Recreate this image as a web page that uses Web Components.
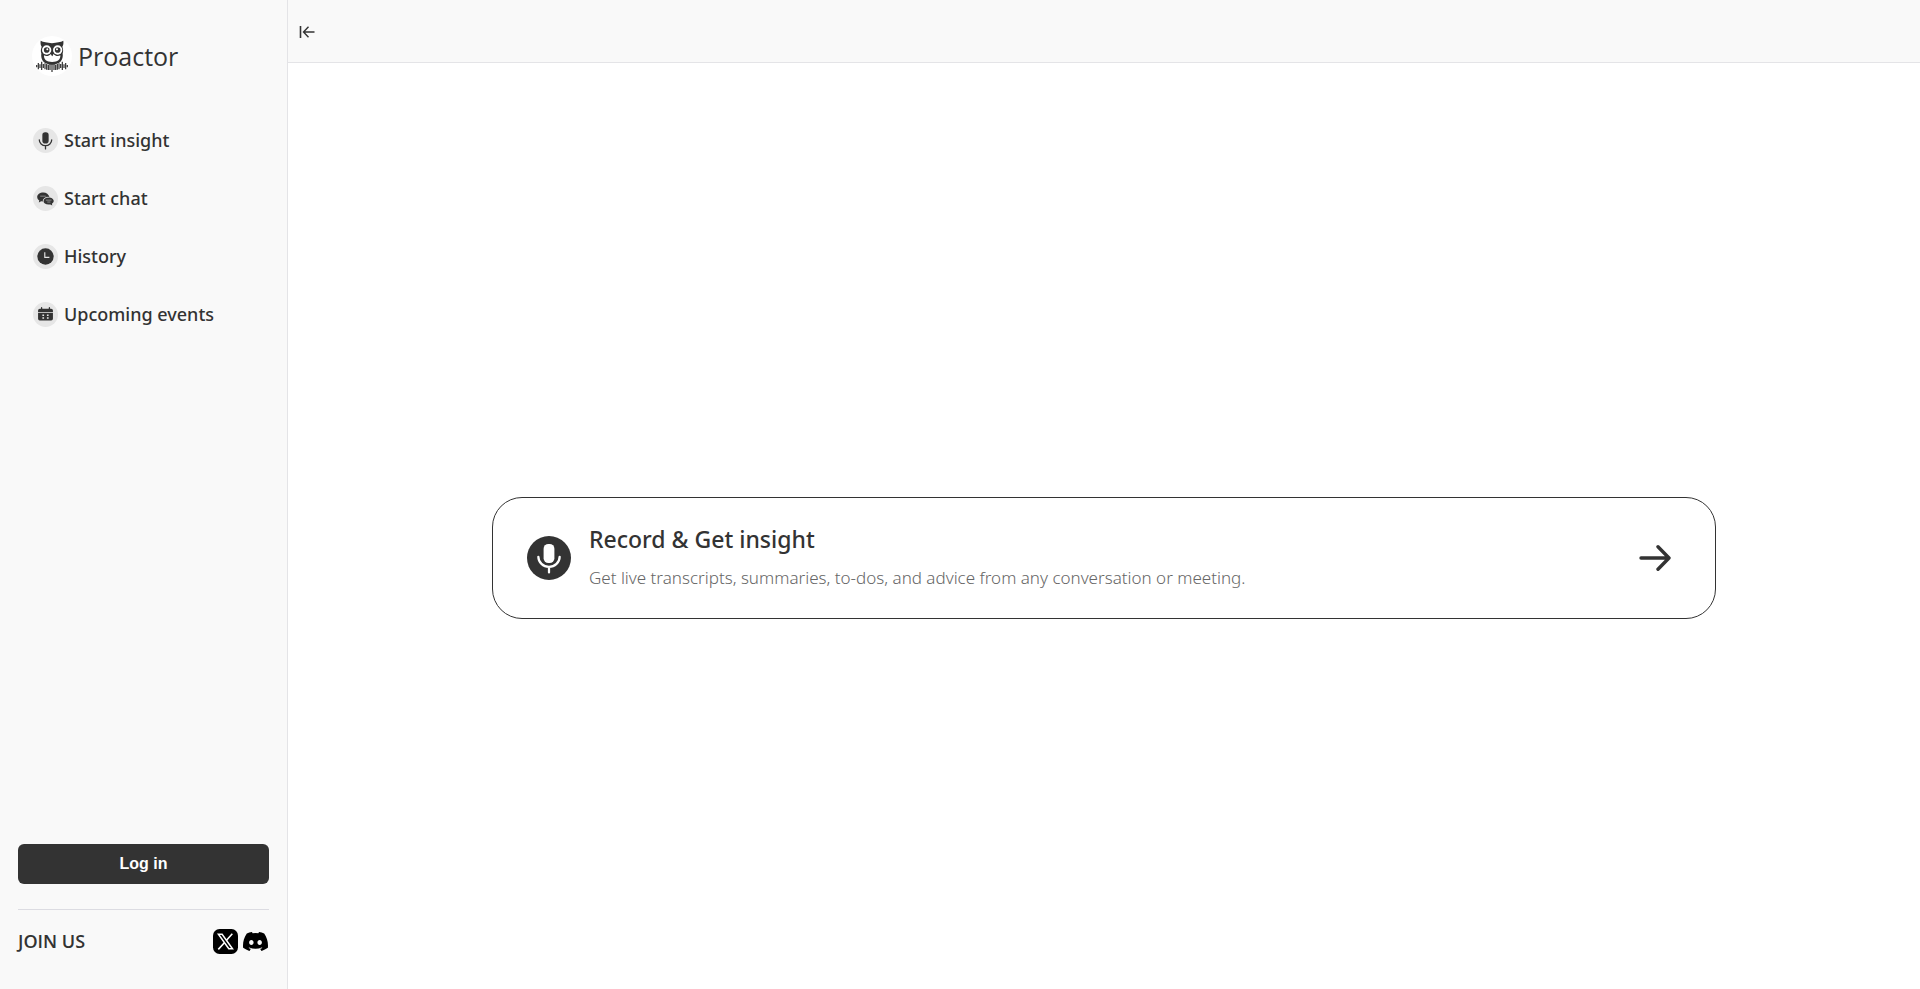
<!DOCTYPE html>
<html lang="en">
<head>
<meta charset="utf-8">
<title>Proactor</title>
<style>
  html, body { height: 100%; margin: 0; }
  body { font-family: "Open Sans", "Noto Sans", sans-serif; color: #333; background: #fff; }
</style>
</head>
<body>
<pro-app></pro-app>
<script>
const icons = {
  mic: `<svg viewBox="0 0 24 24" aria-hidden="true"><rect x="8.4" y="2.600" width="7.200" height="12.800" rx="3.200" fill="currentColor"/><path d="M4.900 11.200a7.100 6.700 0 0 0 14.200 0M12 18v3.600" fill="none" stroke="currentColor" stroke-width="1.500" stroke-linecap="round"/></svg>`,
  chat: `<svg viewBox="0 0 24 24" aria-hidden="true"><path d="M9 3.600c-5 0-8.700 2.700-8.700 6.300 0 2.100 1 3.700 2.900 4.900l-.6 2.700 3.300-1.700 2.400.3c.2-4 3.600-6.600 9.300-6.100C16.500 6.200 13.200 3.600 9 3.600z" fill="currentColor"/><path d="M16.300 10.600c-4.100 0-7.200 2.200-7.200 5s3.100 5 7.200 5c.9 0 1.800-.1 2.600-.3l2.700 1.500-.5-2.500c1.500-.9 2.500-2.200 2.500-3.700 0-2.800-3.200-5-7.300-5z" fill="currentColor"/><path d="M4.500 8.700h8M12.500 14.300h8M14.500 17h4.500" stroke="#aaa" stroke-width="1"/><path d="M8.500 16c0-3.500 3-6.100 8-6.100" fill="none" stroke="#e6e6e6" stroke-width=".7"/></svg>`,
  clock: `<svg viewBox="0 0 24 24" aria-hidden="true"><circle cx="12" cy="12" r="11.500" fill="currentColor"/><path d="M11 6v7.200h6.500" fill="none" stroke="#e6e6e6" stroke-width="1.600"/></svg>`,
  calendar: `<svg viewBox="0 0 24 24" aria-hidden="true"><path d="M4 4h16a2.500 2.500 0 0 1 2.500 2.500V8.600h-21V6.500A2.500 2.500 0 0 1 4 4zM1.500 9.700h21V18a2.500 2.500 0 0 1-2.500 2.500H4A2.500 2.500 0 0 1 1.500 18z" fill="currentColor"/><path d="M6.500 2.400v3M17.500 2.400v3" stroke="currentColor" stroke-width="1.800" stroke-linecap="round"/><path d="M7.600 12h2.400v2H7.600zM14 12h2.400v2H14zM7.600 16h2.400v2H7.600zM14 16h2.400v2H14z" fill="#e6e6e6"/></svg>`,
  collapse: `<svg viewBox="0 0 16 14" aria-hidden="true"><path d="M1.500 1v12" stroke="currentColor" stroke-width="1.600" fill="none"/><path d="M15.500 7H5M9.500 1.800L4.500 7l5 5.200" stroke="currentColor" stroke-width="1.400" fill="none"/></svg>`,
  arrow: `<svg viewBox="0 0 32 32" aria-hidden="true"><path d="M2 16h28M19 4.800L30 16 19 27.200" fill="none" stroke="currentColor" stroke-width="3.400" stroke-linecap="round" stroke-linejoin="round"/></svg>`,
  x: `<svg viewBox="0 0 25 25" aria-hidden="true"><rect width="25" height="25" rx="6.500" fill="#000"/><path d="M5.400 5.200h3.700l10.400 14.600h-3.700z" fill="none" stroke="#fff" stroke-width="1.500"/><path d="M19.300 4.800l-6 6.700M11.400 13.800l-6.100 6.600" stroke="#fff" stroke-width="1.600"/></svg>`,
  discord: `<svg viewBox="0 0 24 24" aria-hidden="true"><path fill="#000" d="M20.317 4.370a19.791 19.791 0 0 0-4.885-1.515.074.074 0 0 0-.079.037c-.211.375-.445.865-.608 1.250a18.270 18.270 0 0 0-5.487 0 12.640 12.640 0 0 0-.617-1.250.077.077 0 0 0-.079-.037A19.736 19.736 0 0 0 3.677 4.370a.07.07 0 0 0-.032.027C.533 9.046-.32 13.580.099 18.058a.082.082 0 0 0 .031.056 19.900 19.900 0 0 0 5.993 3.030.078.078 0 0 0 .084-.028c.462-.63.873-1.295 1.226-1.994a.076.076 0 0 0-.042-.106 13.107 13.107 0 0 1-1.872-.892.077.077 0 0 1-.008-.128c.126-.094.252-.192.372-.291a.074.074 0 0 1 .078-.01c3.927 1.793 8.180 1.793 12.061 0a.074.074 0 0 1 .079.009c.12.099.246.198.373.292a.077.077 0 0 1-.007.128 12.299 12.299 0 0 1-1.873.891.077.077 0 0 0-.041.107c.36.698.772 1.363 1.225 1.993a.076.076 0 0 0 .084.029 19.839 19.839 0 0 0 6.002-3.030.077.077 0 0 0 .031-.055c.5-5.177-.838-9.674-3.548-13.660a.061.061 0 0 0-.031-.029zM8.020 15.331c-1.183 0-2.157-1.086-2.157-2.419s.955-2.419 2.157-2.419c1.210 0 2.176 1.095 2.157 2.419 0 1.333-.956 2.419-2.157 2.419zm7.975 0c-1.183 0-2.157-1.086-2.157-2.419s.955-2.419 2.157-2.419c1.210 0 2.176 1.095 2.157 2.419 0 1.333-.946 2.419-2.157 2.419z"/></svg>`,
  owl: `<svg viewBox="0 0 120 120" aria-hidden="true"><circle cx="60" cy="60" r="60" fill="#fff"/>
    <path d="M26 14C34 19 45 18 60 22c15-4 26-3 34-8 1 8 0 13-3 18 3 8 3 14 1 20 3 22-10 34-32 34S25 74 28 52c-2-6-2-12 1-20-3-5-4-10-3-18z" fill="currentColor"/>
    <path d="M36 58c7 4 15 2 21-4l3.500 7 3.500-7c6 6 14 8 21 4 1 13-8 20-24.500 20S35 71 36 58z" fill="#fff"/>
    <circle cx="44" cy="42" r="14" fill="#fff"/><circle cx="77" cy="42" r="14" fill="#fff"/>
    <circle cx="44" cy="42" r="8.500" fill="currentColor"/><circle cx="77" cy="42" r="8.500" fill="currentColor"/>
    <circle cx="46" cy="40" r="3" fill="#fff"/><circle cx="75" cy="40" r="3" fill="#fff"/>
    <path d="M56 50h9l-4.500 11z" fill="currentColor"/>
    <path d="M14 87v7M19 81v19M24 85v11M29 77v25M34 84v12M39 82v18M44 84v17M49 86v16M54 84v18M60 84v24M66 84v18M71 86v16M76 84v17M81 82v18M86 84v12M91 77v25M96 85v11M101 81v19M106 87v7" stroke="currentColor" stroke-width="3.600" fill="none"/></svg>`
};

function define(name, html, setup) {
  const template = document.createElement('template');
  template.innerHTML = html;
  customElements.define(name, class extends HTMLElement {
    constructor() {
      super();
      this.attachShadow({ mode: 'open' }).append(template.content.cloneNode(true));
    }
    connectedCallback() { if (setup) setup(this, this.shadowRoot); }
  });
}

define('pro-icon', `
  <style>:host { display: block; flex: none; width: 24px; height: 24px; } svg { display: block; width: 100%; height: 100%; }</style>`,
  (host, root) => { if (!root.querySelector('svg')) root.innerHTML += icons[host.getAttribute('name')]; });

define('pro-brand', `
  <style>
    :host { display: block; }
    a { display: flex; align-items: center; gap: 6px; color: inherit; text-decoration: none; font-size: 25px; line-height: 40px; }
    pro-icon { width: 40px; height: 40px; }
  </style>
  <a href="#"><pro-icon name="owl"></pro-icon><span><slot></slot></span></a>`);

define('pro-nav-item', `
  <style>
    :host { display: block; }
    a { display: flex; align-items: center; gap: 6px; color: inherit; text-decoration: none; font-family: "Noto Sans", sans-serif; font-size: 18px; font-weight: 500; line-height: 25px; }
    .disc { display: grid; place-items: center; width: 25px; height: 25px; border-radius: 50%; background: #e6e6e6; }
    pro-icon { width: var(--glyph, 17px); height: var(--glyph, 17px); }
  </style>
  <a href="#"><span class="disc"><pro-icon></pro-icon></span><span><slot></slot></span></a>`,
  (host, root) => {
    const old = root.querySelector('pro-icon');
    const icon = document.createElement('pro-icon');
    icon.setAttribute('name', host.getAttribute('icon'));
    old.replaceWith(icon);
  });

define('pro-sidebar', `
  <style>
    :host { display: flex; flex-direction: column; box-sizing: border-box; width: 15%; min-width: 240px; padding: 36px 18px 32px; border-right: 1px solid #e4e4e7; background: #f9f9f9; }
    pro-brand { padding-left: 14px; }
    nav { display: flex; flex-direction: column; gap: 33px; margin: 52px 15px 0; }
    .mic { --glyph: 21px; }
    footer { margin-top: auto; }
    button { display: block; width: 100%; height: 40px; border: 0; border-radius: 6px; background: #333; color: #fff; font: bold 16px "Liberation Sans", Arial, sans-serif; cursor: pointer; }
    .join { display: flex; align-items: center; gap: 5px; margin-top: 25px; padding: 15px 1px 0 0; border-top: 1px solid #dcdce2; font-size: 18px; font-weight: 600; line-height: 32px; }
    .join span { flex: 1; }
    .join pro-icon { width: 25px; height: 25px; }
  </style>
  <pro-brand>Proactor</pro-brand>
  <nav>
    <pro-nav-item class="mic" icon="mic">Start insight</pro-nav-item>
    <pro-nav-item icon="chat">Start chat</pro-nav-item>
    <pro-nav-item icon="clock">History</pro-nav-item>
    <pro-nav-item icon="calendar">Upcoming events</pro-nav-item>
  </nav>
  <footer>
    <button type="button">Log in</button>
    <div class="join"><span>JOIN US</span>
      <a href="#" aria-label="X"><pro-icon name="x"></pro-icon></a>
      <a href="#" aria-label="Discord"><pro-icon name="discord"></pro-icon></a>
    </div>
  </footer>`);

define('pro-topbar', `
  <style>
    :host { display: flex; align-items: center; box-sizing: border-box; height: 63px; padding: 2px 11px 0; border-bottom: 1px solid #e4e4e7; background: #f9f9f9; }
    button { display: block; padding: 0; border: 0; background: none; color: inherit; cursor: pointer; }
    pro-icon { width: 16px; height: 14px; }
  </style>
  <button type="button" aria-label="Collapse sidebar"><pro-icon name="collapse"></pro-icon></button>`);

define('pro-action-card', `
  <style>
    :host { display: block; }
    a { display: flex; align-items: center; gap: 18px; box-sizing: border-box; min-height: 122px; padding: 20px 44px 20px 34px; border: 1px solid #333; border-radius: 30px; color: inherit; text-decoration: none; background: #fff; font-family: "Noto Sans", sans-serif; }
    .disc { display: grid; place-items: center; flex: none; width: 44px; height: 44px; border-radius: 50%; background: #333; color: #fff; }
    .disc pro-icon { width: 36px; height: 36px; }
    .text { flex: 1; }
    h2 { margin: 0 0 6px; font-size: 23px; font-weight: 500; line-height: 33px; }
    p { margin: 0; font-size: 17px; font-weight: 300; line-height: 32px; color: #666; }
    .arrow { width: 32px; height: 32px; }
  </style>
  <a href="#">
    <span class="disc"><pro-icon name="mic"></pro-icon></span>
    <div class="text"><h2><slot name="title"></slot></h2><p><slot></slot></p></div>
    <pro-icon class="arrow" name="arrow"></pro-icon>
  </a>`);

define('pro-app', `
  <style>
    :host { display: flex; min-height: 100%; }
    .page { display: flex; flex-direction: column; flex: 1; }
    main { display: flex; flex: 1; align-items: center; justify-content: center; padding-top: 64px; }
    pro-action-card { width: 75%; }
  </style>
  <pro-sidebar></pro-sidebar>
  <div class="page">
    <pro-topbar></pro-topbar>
    <main>
      <pro-action-card><span slot="title">Record &amp; Get insight</span>Get live transcripts, summaries, to-dos, and advice from any conversation or meeting.</pro-action-card>
    </main>
  </div>`);
</script>
</body>
</html>
